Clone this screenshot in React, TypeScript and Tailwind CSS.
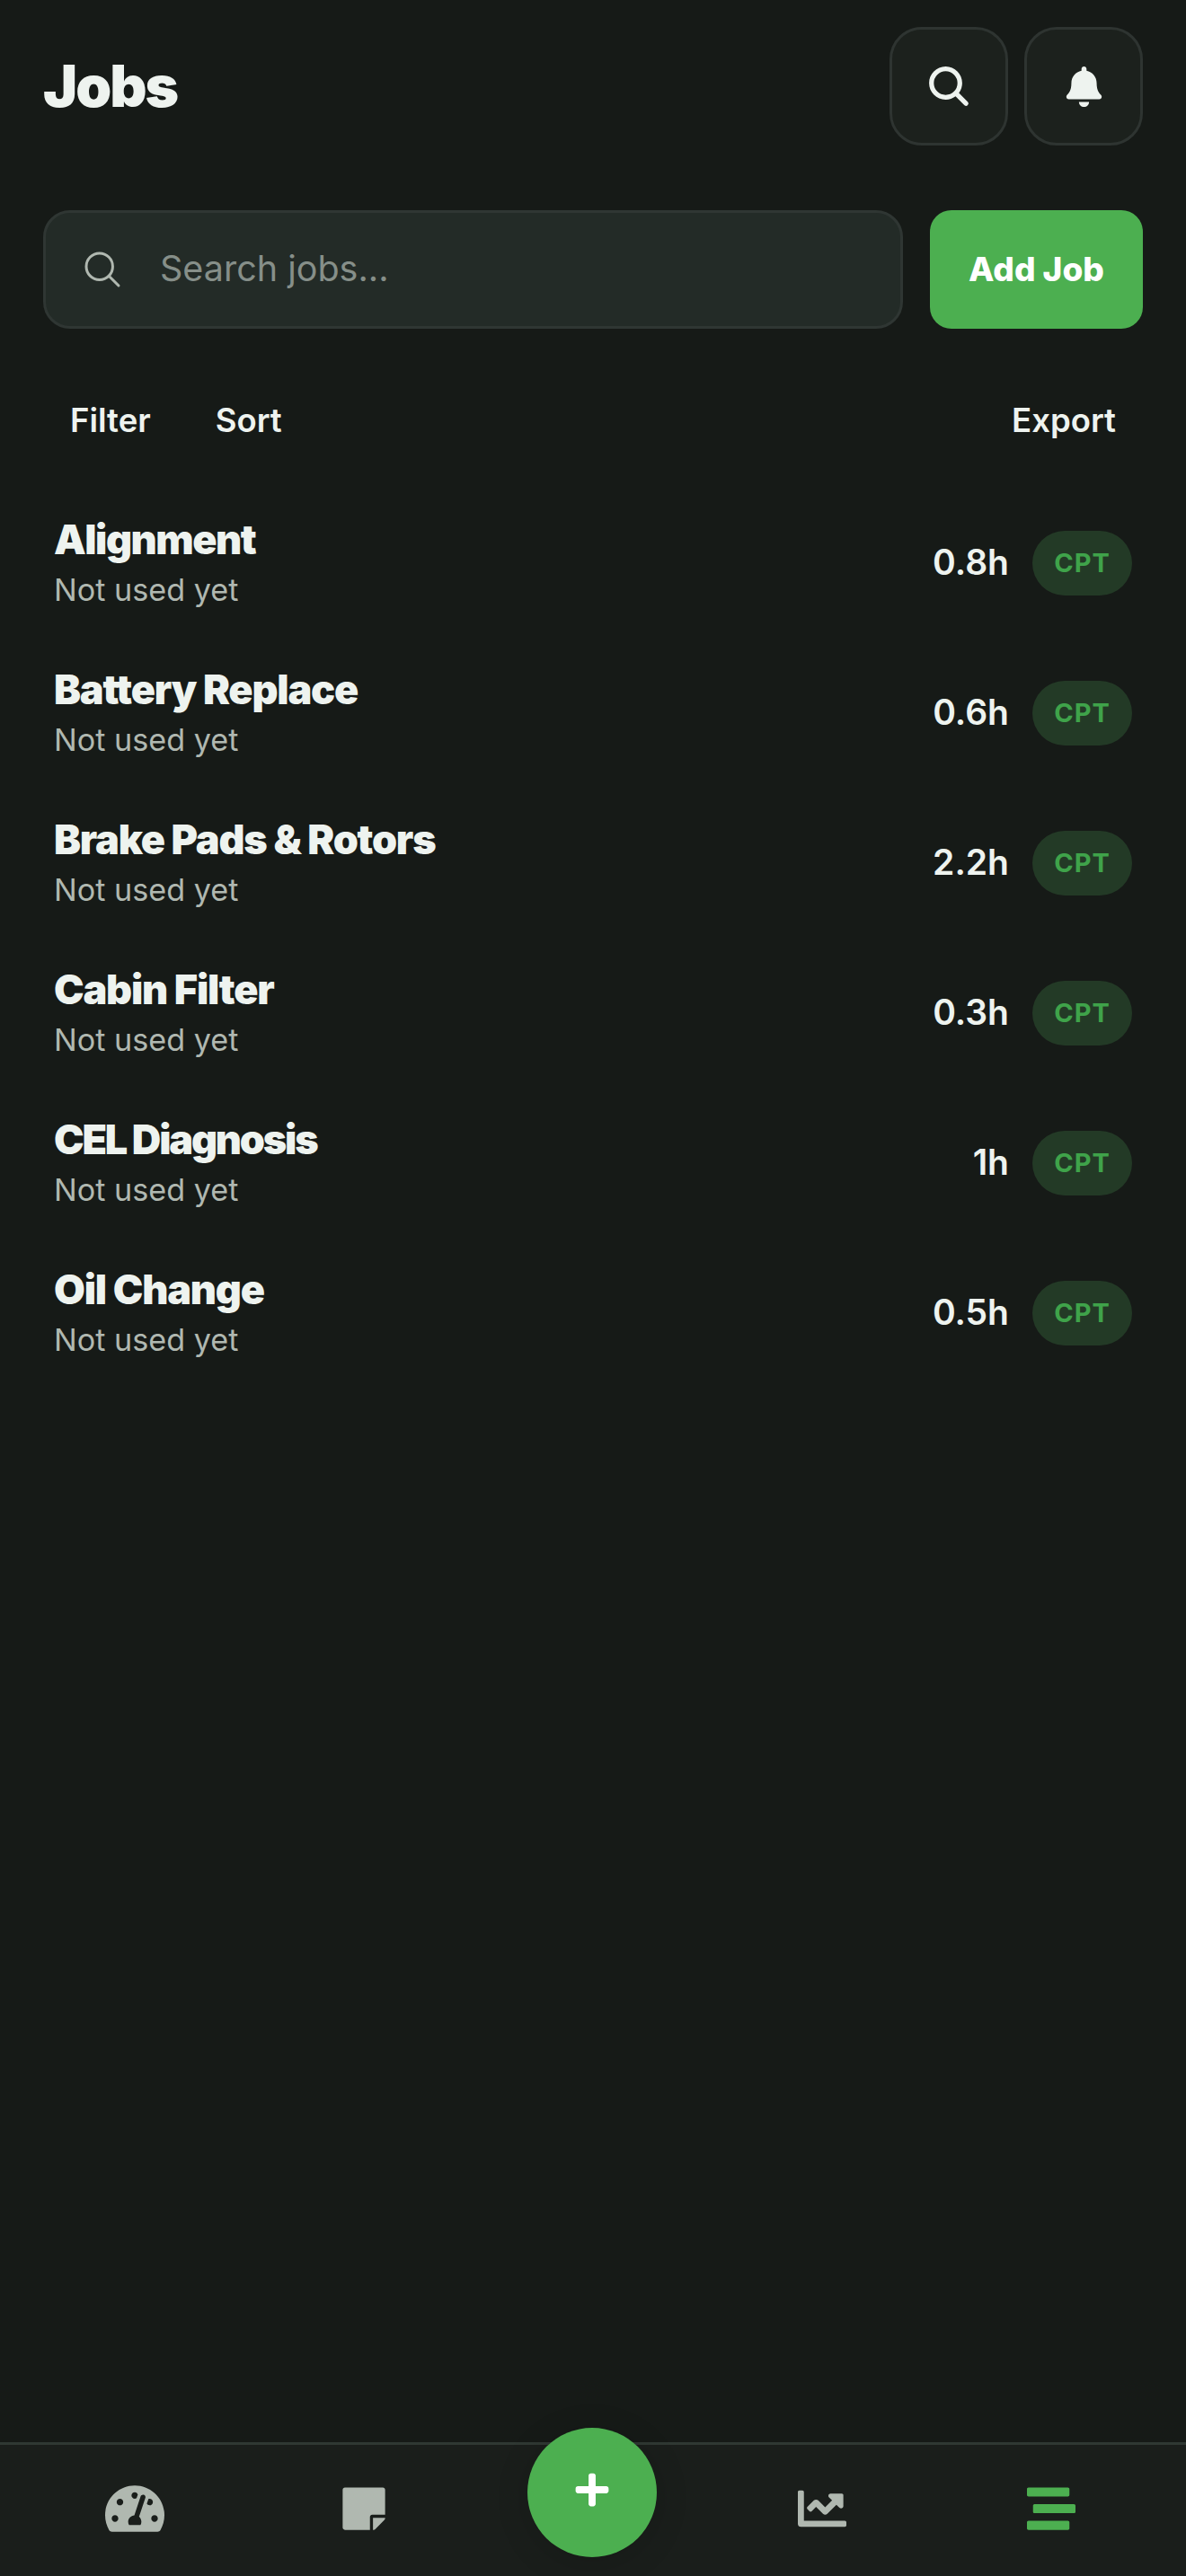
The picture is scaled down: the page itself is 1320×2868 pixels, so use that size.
import React from 'react';
import { FaBell, FaChartLine, FaPlus, FaStickyNote, FaStream, FaTachometerAlt } from 'react-icons/fa';
import { IoSearch, IoSearchOutline } from 'react-icons/io5';

const jobs = [
  { name: 'Alignment', hours: '0.8h', spacing: 'tracking-[-1.5px]' },
  { name: 'Battery Replace', hours: '0.6h', spacing: 'tracking-[-1.2px]' },
  { name: 'Brake Pads & Rotors', hours: '2.2h', spacing: 'tracking-[-1.2px]' },
  { name: 'Cabin Filter', hours: '0.3h', spacing: 'tracking-[-1.2px]' },
  { name: 'CEL Diagnosis', hours: '1h', spacing: 'tracking-[-2.2px]' },
  { name: 'Oil Change', hours: '0.5h', spacing: 'tracking-[-1.2px]' },
];

const App: React.FC = () => {
  return (
    <div className="w-[1320px] h-[2868px] flex flex-col bg-[#161a17] font-['Inter',sans-serif] text-[#eef3ef]">
      {/* Header */}
      <header className="flex items-center justify-between pt-[30px] px-[48px]">
        <h1 className="text-[64px] leading-[132px] font-black tracking-[-2px]">Jobs</h1>
        <div className="flex gap-[18px]">
          <button className="w-[132px] h-[132px] flex items-center justify-center rounded-[36px] bg-[#1c211d] border-[3px] border-[#2e3431]">
            <IoSearch size={54} />
          </button>
          <button className="w-[132px] h-[132px] flex items-center justify-center rounded-[36px] bg-[#1c211d] border-[3px] border-[#2e3431]">
            <FaBell size={45} />
          </button>
        </div>
      </header>

      {/* Search */}
      <div className="flex gap-[30px] mt-[72px] px-[48px]">
        <div className="flex-1 h-[132px] flex items-center gap-[40px] pl-[39px] rounded-[30px] bg-[#232b27] border-[3px] border-[#2f3633]">
          <IoSearchOutline size={48} className="text-[#b0b8b0]" />
          <span className="text-[39.5px] text-[#868f89]">Search jobs...</span>
        </div>
        <button className="w-[237px] h-[132px] rounded-[24px] bg-[#4caf50] text-[37px] font-extrabold text-white">Add Job</button>
      </div>

      {/* Actions */}
      <div className="flex items-center justify-between mt-[78px] px-[78px] text-[36.5px] font-semibold leading-[48px]">
        <div className="flex gap-[72px]">
          <span>Filter</span>
          <span>Sort</span>
        </div>
        <span>Export</span>
      </div>

      {/* Job list */}
      <main className="flex-1 mt-[51px] px-[60px]">
        {jobs.map(job => (
          <div key={job.name} className="h-[167px] flex items-center justify-between">
            <div>
              <div className={`text-[45px] leading-[54px] mt-[2px] font-black ${job.spacing}`}>{job.name}</div>
              <div className="text-[34.2px] leading-[50px] mt-[4px] text-[#b0b8b0]">Not used yet</div>
            </div>
            <div className="flex items-center gap-[26px]">
              <span className="text-[39px] font-semibold">{job.hours}</span>
              <span className="w-[111px] h-[72px] flex items-center justify-center rounded-full bg-[#233a26] text-[29px] font-bold tracking-[1px] text-[#3fa34a]">
                CPT
              </span>
            </div>
          </div>
        ))}
      </main>

      {/* Bottom nav */}
      <nav className="h-[149px] grid grid-cols-5 items-center px-[22px] pb-[4px] bg-[#1a1e1b] border-t-[3px] border-[#2f3833] text-[#b0b8b0]">
        <div className="flex justify-center"><FaTachometerAlt size={66} /></div>
        <div className="flex justify-center"><FaStickyNote size={54} /></div>
        <div className="relative h-full">
          <button className="absolute left-[55px] top-[-19px] w-[144px] h-[144px] flex items-center justify-center rounded-full bg-[#4caf50] text-white shadow-[0_6px_36px_rgba(0,0,0,0.15)]">
            <FaPlus size={42} className="mt-[-6px]" />
          </button>
        </div>
        <div className="flex justify-center"><FaChartLine size={54} /></div>
        <div className="flex justify-center text-[#4caf50]"><FaStream size={54} /></div>
      </nav>
    </div>
  );
};

export default App;
